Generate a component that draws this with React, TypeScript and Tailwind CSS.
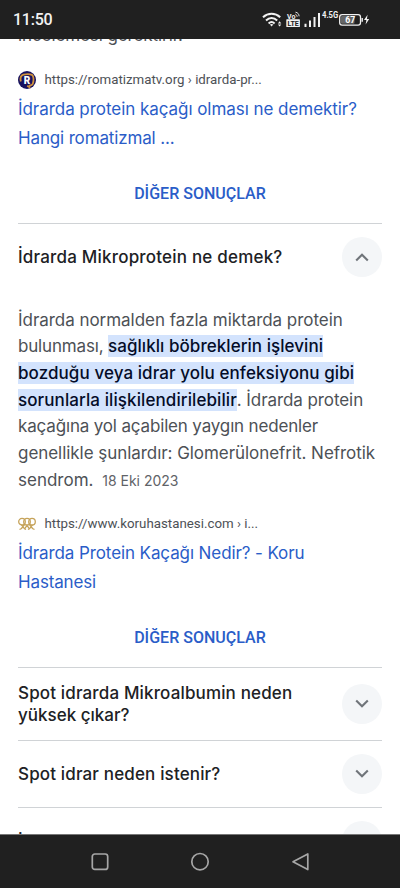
import React from 'react';

interface Source {
  icon: React.ReactNode;
  url: string;
  lines: { text: string; className: string }[];
}

const answerLines = [
  { before: 'İdrarda normalden fazla miktarda protein', className: 'tracking-[-0.04px]' },
  { before: 'bulunması, ', mark: 'sağlıklı böbreklerin işlevini', className: 'tracking-[-0.17px]', markClass: 'tracking-[0.05px]' },
  { mark: 'bozduğu veya idrar yolu enfeksiyonu gibi', className: '', markClass: 'tracking-[0.08px]' },
  { mark: 'sorunlarla ilişkilendirilebilir', after: '. İdrarda protein', className: 'tracking-[-0.08px]', markClass: 'tracking-[0.09px]' },
  { before: 'kaçağına yol açabilen yaygın nedenler', className: 'tracking-[-0.16px]' },
  { before: 'genellikle şunlardır: Glomerülonefrit. Nefrotik', className: 'tracking-[-0.05px]' },
];

function StatusBar() {
  return (
    <header className="flex h-[39px] shrink-0 items-center justify-between bg-[#202020] pl-[13px] pr-[30px] text-[#f2f2f2]">
      <span className="pt-px font-[Roboto] text-[16px] font-medium leading-5 tracking-[-0.25px]">11:50</span>
      <svg width="108" height="20" viewBox="262 10 108 20" fill="none">
        {/* wifi */}
        <g stroke="#f2f2f2" strokeWidth="2">
          <path d="M263 17.200c5-4.600 12.200-4.600 17.200 0" />
          <path d="M266 20.400c3.400-3.100 7.800-3.100 11.200 0" />
          <path d="M268.600 23.400c1.800-1.600 4.200-1.600 6 0" />
        </g>
        <path d="M269.900 24.600c1-.8 2.400-.8 3.400 0l-1.700 2z" fill="#f2f2f2" />
        <path d="M277.900 23.400l1.700-2.200 1.700 2.200zM277.900 24.400l1.700 2.200 1.700-2.200z" fill="#f2f2f2" />
        {/* volte */}
        <text x="287" y="18.600" fontSize="7" fontWeight="700" fill="#f2f2f2" fontFamily="Roboto, sans-serif">Vo</text>
        <path d="M295.300 14.200c1.200.4 1.800 1.200 1.800 2.600M295.500 12.200c2.400.4 3.500 1.900 3.600 4.100" stroke="#f2f2f2" strokeWidth=".9" />
        <rect x="286.300" y="19.300" width="13.600" height="7.700" rx=".6" fill="#f2f2f2" />
        <text x="287.400" y="25.800" fontSize="7.500" fontWeight="700" fill="#202020" textLength="11.400" lengthAdjust="spacingAndGlyphs" fontFamily="Roboto, sans-serif">LTE</text>
        {/* signal */}
        <path d="M305.500 23.800V27M310 20.500V27M314.500 17V27M319 13V27" stroke="#f2f2f2" strokeWidth="2" />
        <text x="322" y="18.200" fontSize="8.500" fontWeight="700" fill="#f2f2f2" textLength="16.200" lengthAdjust="spacingAndGlyphs" fontFamily="Roboto, sans-serif">4.5G</text>
        {/* battery */}
        <rect x="339.700" y="14.600" width="20.800" height="10.600" rx="2.400" stroke="#f2f2f2" strokeWidth="1.300" />
        <rect x="341" y="16" width="13.500" height="7.800" rx="1" fill="#666" />
        <path d="M362.200 18v3.800" stroke="#f2f2f2" strokeWidth="1.400" />
        <text x="345.300" y="23.100" fontSize="9" fontWeight="700" fill="#fff" textLength="10" lengthAdjust="spacingAndGlyphs" fontFamily="Roboto, sans-serif">67</text>
        <path d="M367.600 14.800l-3.600 5.300h2.400l-.8 4.400 3.600-5.500h-2.300z" fill="#f2f2f2" />
      </svg>
    </header>
  );
}

function RomatizmaIcon() {
  return (
    <svg width="18" height="18" viewBox="0 0 18 18" fill="none">
      <circle cx="9" cy="9" r="9" fill="#17125f" />
      <path d="M2.800 10.500C2 6.500 3.200 4.200 5.500 3.600c3-.7 6.600-.6 8.500.3 1.900 1.100 1.900 6.300.7 9.100-.6 1-1.800 1.400-3 1.600l-.2 1.600-2.300-1.500" stroke="#d0923c" strokeWidth="1.800" />
      <text x="5.700" y="12.600" fontSize="10" fontWeight="900" fill="#fff" fontFamily="Roboto, sans-serif">R</text>
    </svg>
  );
}

function KoruIcon() {
  return (
    <svg width="18" height="14" viewBox="0 0 18 14" fill="none" stroke="#c6a35a" strokeWidth="1.300">
      <circle cx="4" cy="4.700" r="3.300" />
      <circle cx="9" cy="4.700" r="3.300" />
      <circle cx="14" cy="4.700" r="3.300" />
      <path d="M1.500 12.500l2-1L6.500 7.500M3.500 7.800l3 4L8 12.500M10 12.500l1.500-.7 3-4M6.500 11.800l3-4M8.500 7.800l3 4M11.500 7.500l3 4 2 1" />
    </svg>
  );
}

function SourceResult({ icon, url, lines }: Source) {
  return (
    <div className="flex shrink-0 flex-col">
      <div className="flex h-[30px] items-center gap-[8.5px]">
        <span className="flex w-[18px] justify-center">{icon}</span>
        <span className="font-[Roboto] text-[13.3px] leading-5 text-[#4d5156]">{url}</span>
      </div>
      <a className="flex flex-col items-start text-[17px] leading-[29px] text-[#2a5dc8]">
        {lines.map((line) => (
          <span key={line.text} className={`whitespace-nowrap ${line.className}`}>{line.text}</span>
        ))}
      </a>
    </div>
  );
}

function MoreResults() {
  return (
    <button className="flex h-[70px] w-full shrink-0 items-center justify-center pt-[12px] font-[Roboto] text-[16px] font-medium tracking-[0.02px] text-[#2a5dc8]">
      DİĞER SONUÇLAR
    </button>
  );
}

function Toggle({ open = false }: { open?: boolean }) {
  return (
    <span className="-mt-px flex size-10 shrink-0 items-center justify-center rounded-full bg-[#f4f6f8]">
      <svg width="14" height="9" viewBox="0 0 14 9" fill="none" stroke="#70757a" strokeWidth="2.100">
        <path d={open ? 'M1.200 7.500L7 1.700l5.800 5.800' : 'M1.200 1.500L7 7.300l5.800-5.800'} />
      </svg>
    </span>
  );
}

export default function App() {
  return (
    <div className="flex h-[888px] w-[400px] flex-col overflow-hidden bg-white font-[Inter,sans-serif]">
      <StatusBar />
      <main className="flex min-h-0 flex-1 flex-col overflow-hidden px-[18px]">
        <p className="-mt-[17px] h-[43px] shrink-0 whitespace-nowrap text-[17px] leading-[27px] tracking-[-0.1px] text-[#4d5156]">incelemesi gerektirir.</p>

        <SourceResult
          icon={<RomatizmaIcon />}
          url="https://romatizmatv.org › idrarda-pr..."
          lines={[
            { text: 'İdrarda protein kaçağı olması ne demektir?', className: 'tracking-[-0.05px]' },
            { text: 'Hangi romatizmal ...', className: 'tracking-[-0.15px]' },
          ]}
        />
        <MoreResults />

        <section className="flex shrink-0 flex-col border-t border-[#d0d3d6]">
          <div className="flex h-[67px] items-center justify-between">
            <h2 className="whitespace-nowrap pt-px text-[17px] font-medium tracking-[0.2px] text-[#202124]">İdrarda Mikroprotein ne demek?</h2>
            <Toggle open />
          </div>
          <div className="mt-[15.500px] flex h-[202.500px] flex-col text-[17px] leading-[26.670px] text-[#4d5156]">
            {answerLines.map((line, i) => (
              <p key={i} className={`whitespace-nowrap ${line.className}`}>
                {line.before}
                {line.mark && <b className={`bg-[#d3e3fd] py-px font-medium text-[#040c28] ${line.markClass}`}>{line.mark}</b>}
                {line.after}
              </p>
            ))}
            <p className="whitespace-nowrap">
              sendrom. <span className="ml-1 text-[14px] text-[#5f6368]">18 Eki 2023</span>
            </p>
          </div>
          <SourceResult
            icon={<KoruIcon />}
            url="https://www.koruhastanesi.com › i..."
            lines={[
              { text: 'İdrarda Protein Kaçağı Nedir? - Koru', className: 'tracking-[-0.1px]' },
              { text: 'Hastanesi', className: 'tracking-[-0.15px]' },
            ]}
          />
          <MoreResults />
        </section>

        <section className="flex h-[73px] shrink-0 items-center justify-between border-t border-[#d0d3d6]">
          <h2 className="whitespace-nowrap text-[17px] font-medium leading-[22px] text-[#202124]">
            <span className="tracking-[0.15px]">Spot idrarda Mikroalbumin neden</span>
            <br />
            <span>yüksek çıkar?</span>
          </h2>
          <Toggle />
        </section>
        <section className="flex h-[67px] shrink-0 items-center justify-between border-t border-[#d0d3d6]">
          <h2 className="whitespace-nowrap pt-px text-[17px] font-medium tracking-[0.15px] text-[#202124]">Spot idrar neden istenir?</h2>
          <Toggle />
        </section>
        <section className="flex h-[67px] shrink-0 items-center justify-between border-t border-[#d0d3d6]">
          <h2 className="whitespace-nowrap pt-[5px] text-[17px] font-medium text-[#202124]">İdrarda protein kaçağı</h2>
          <Toggle />
        </section>
      </main>

      <nav className="flex h-[54px] shrink-0 items-center justify-between border-t border-[#777] bg-[#202020] px-[90px]">
        <svg width="20" height="20" viewBox="0 0 20 20" fill="none" stroke="#a6a6a6" strokeWidth="1.700">
          <rect x="2.300" y="2" width="15.400" height="15.400" rx="2.500" />
        </svg>
        <svg width="20" height="20" viewBox="0 0 20 20" fill="none" stroke="#a6a6a6" strokeWidth="1.700">
          <circle cx="10" cy="9.700" r="8.200" />
        </svg>
        <svg width="20" height="20" viewBox="0 0 20 20" fill="none" stroke="#a6a6a6" strokeWidth="1.700" strokeLinejoin="round">
          <path d="M17.800 2v15.600L3 9.800z" />
        </svg>
      </nav>
    </div>
  );
}
